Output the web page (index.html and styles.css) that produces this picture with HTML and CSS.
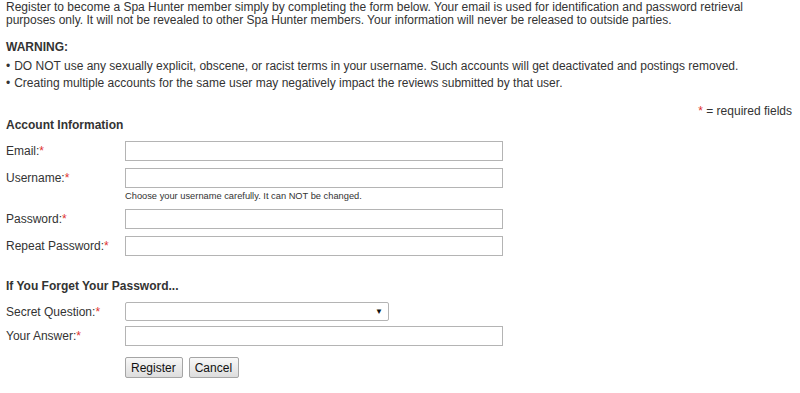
FILE: index.html
```html
<!DOCTYPE html>
<html lang="en">
<head>
    <meta charset="UTF-8">
    <title>Register - Spa Hunter</title>
    <link rel="stylesheet" href="styles.css">
</head>
<body>
    <div class="page">
        <p class="intro">Register to become a Spa Hunter member simply by completing the form below. Your email is used for identification and password retrieval purposes only. It will not be revealed to other Spa Hunter members. Your information will never be released to outside parties.</p>

        <div class="warning">
            <h3>WARNING:</h3>
            <ul>
                <li>DO NOT use any sexually explicit, obscene, or racist terms in your username. Such accounts will get deactivated and postings removed.</li>
                <li>Creating multiple accounts for the same user may negatively impact the reviews submitted by that user.</li>
            </ul>
        </div>

        <div class="required-note"><span class="req">*</span> = required fields</div>

        <form class="reg-form">
            <h4>Account Information</h4>
            <div class="row">
                <label>Email:<span class="req">*</span></label>
                <input type="text" class="field">
            </div>
            <div class="row">
                <label>Username:<span class="req">*</span></label>
                <div>
                    <input type="text" class="field">
                    <div class="hint">Choose your username carefully. It can NOT be changed.</div>
                </div>
            </div>
            <div class="row">
                <label>Password:<span class="req">*</span></label>
                <input type="password" class="field">
            </div>
            <div class="row">
                <label>Repeat Password:<span class="req">*</span></label>
                <input type="password" class="field">
            </div>

            <h4 class="section">If You Forget Your Password...</h4>
            <div class="row select-row">
                <label>Secret Question:<span class="req">*</span></label>
                <div class="select-box"><span class="arrow">&#9660;</span></div>
            </div>
            <div class="row">
                <label>Your Answer:<span class="req">*</span></label>
                <input type="text" class="field">
            </div>
            <div class="row buttons">
                <label></label>
                <div class="btn-group">
                    <button type="button">Register</button>
                    <button type="button">Cancel</button>
                </div>
            </div>
        </form>
    </div>
</body>
</html>
```

FILE: styles.css
```css
body {
    margin: 0;
    font-family: "Liberation Sans", Arial, sans-serif;
    font-size: 12px;
    color: #333;
    background: #fff;
}

.page {
    padding: 1px 8px 0 6px;
}

.intro {
    margin: 0;
    line-height: 13px;
}

.warning {
    margin-top: 12px;
}

.warning h3 {
    margin: 0 0 3px;
    font-size: 12px;
    line-height: 16px;
}

.warning ul {
    margin: 0;
    padding: 0;
    list-style: none;
}

.warning li {
    line-height: 17px;
}

.warning li::before {
    content: "\2022";
    margin-right: 4px;
}

.required-note {
    text-align: right;
    margin-top: 12px;
    line-height: 14px;
}

.req {
    color: #e0332f;
}

.reg-form h4 {
    margin: 0 0 9px;
    font-size: 12px;
    line-height: 14px;
}

.reg-form h4.section {
    margin-top: 23px;
}

.row {
    display: flex;
    align-items: flex-start;
    margin-bottom: 7px;
}

.row label {
    width: 119px;
    flex: none;
    line-height: 20px;
}

.field {
    width: 378px;
    height: 20px;
    box-sizing: border-box;
    border: 1px solid #b4b4b4;
    margin: 0;
    padding: 0 3px;
    display: block;
}

.hint {
    font-size: 9.3px;
    line-height: 12px;
    margin-top: 2px;
}

.select-row {
    margin-bottom: 4px;
}

.select-box {
    width: 264px;
    height: 19px;
    box-sizing: border-box;
    border: 1px solid #b4b4b4;
    border-radius: 2px;
    display: flex;
    justify-content: flex-end;
    align-items: center;
    padding-right: 5px;
}

.arrow {
    font-size: 8px;
    color: #111;
}

.buttons {
    margin-top: 11px;
}

.btn-group {
    display: flex;
    gap: 6px;
}

.buttons button {
    font-family: "Liberation Sans", Arial, sans-serif;
    font-size: 12px;
    color: #111;
    height: 21px;
    padding: 0 6px 0 5px;
    margin: 0;
    background: linear-gradient(#f8f8f8, #dddddd);
    border: 1px solid #a5a5a5;
    border-radius: 2px;
}
```
